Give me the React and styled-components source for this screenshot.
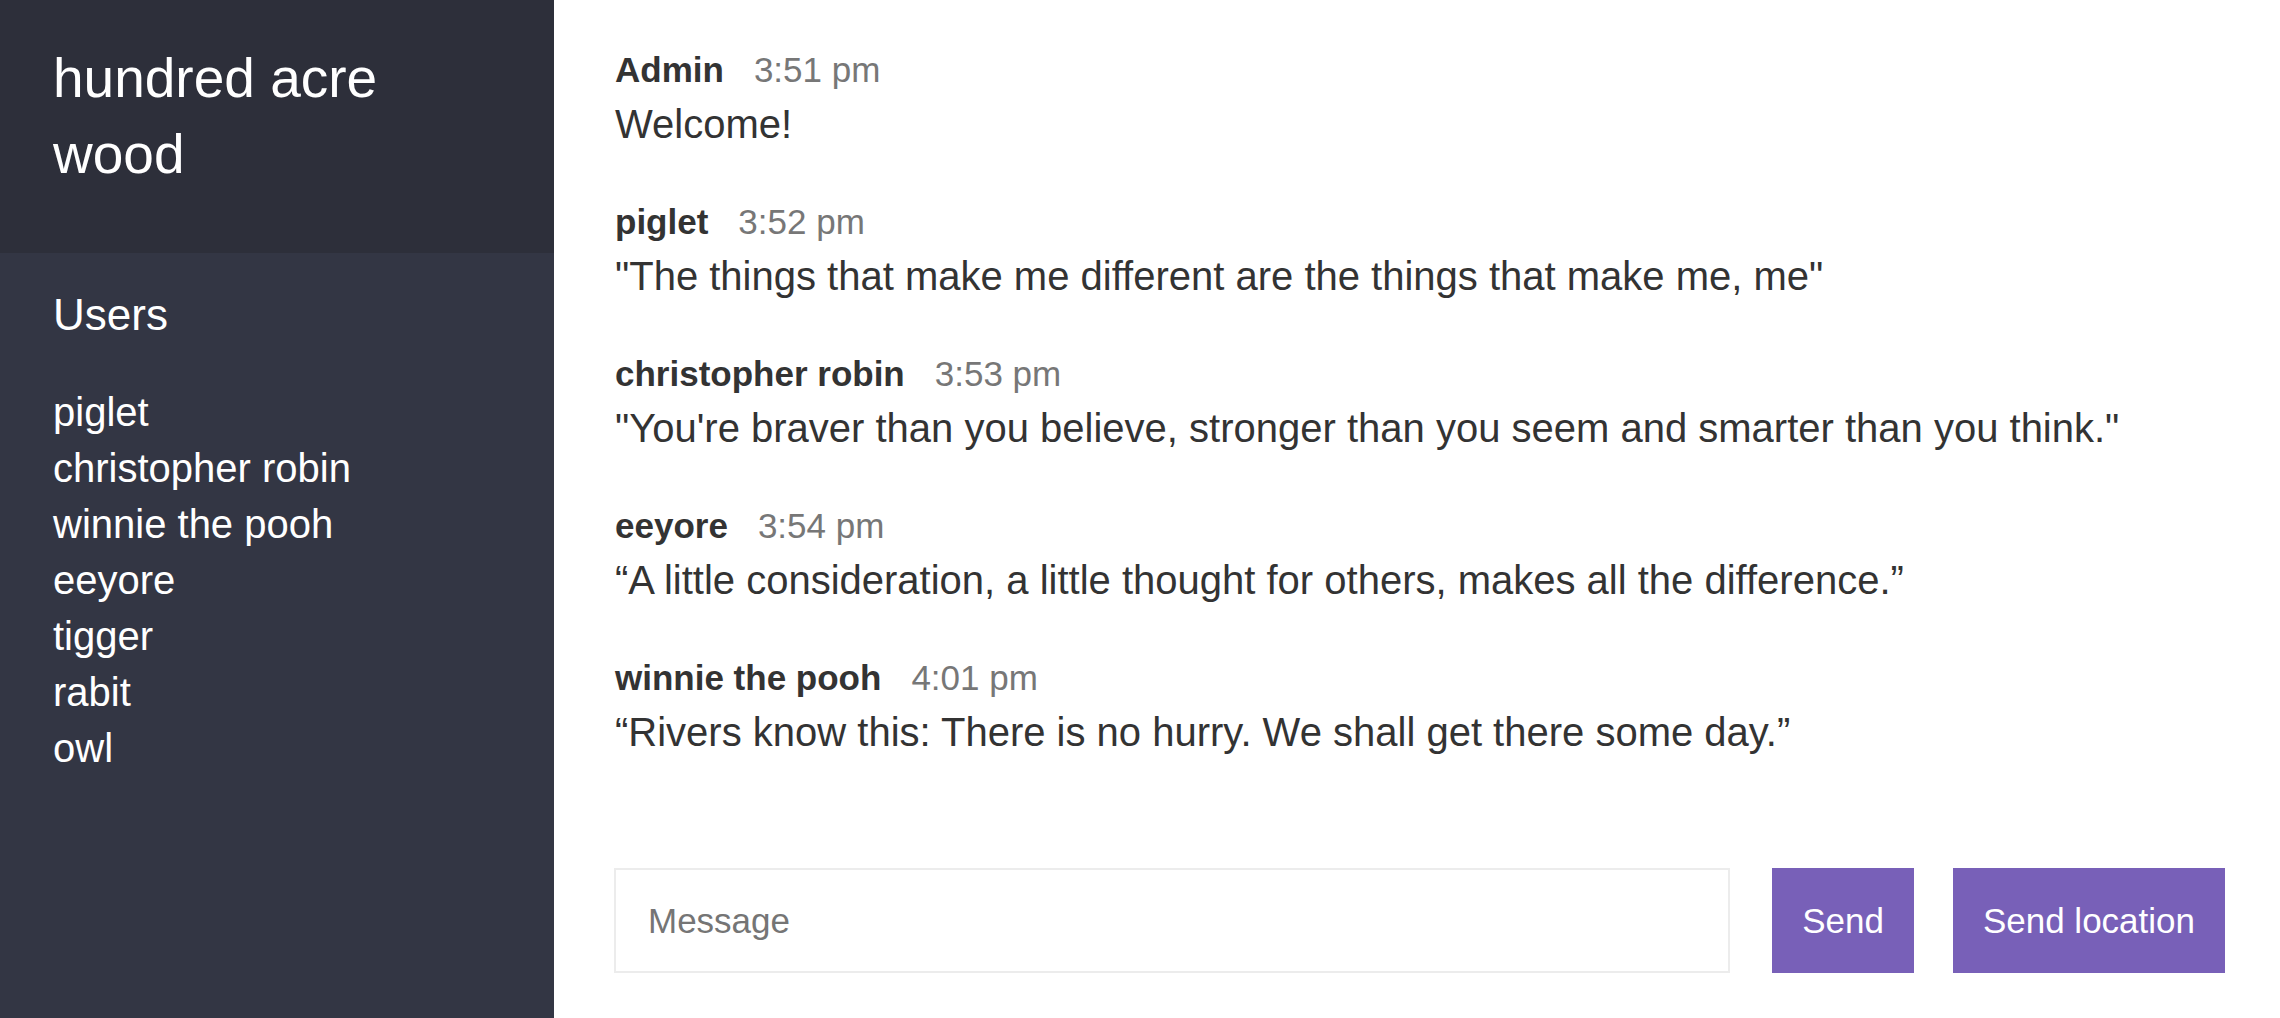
import React from "react";
import styled, { createGlobalStyle } from "styled-components";

const GlobalStyle = createGlobalStyle`
  * {
    margin: 0;
    padding: 0;
    box-sizing: border-box;
  }
  body {
    font-family: "Liberation Sans", Helvetica, Arial, sans-serif;
    font-size: 40px;
    line-height: 1.4;
    color: #333333;
    background: #fff;
  }
`;

const users = [
  "piglet",
  "christopher robin",
  "winnie the pooh",
  "eeyore",
  "tigger",
  "rabit",
  "owl",
];

const messages = [
  { name: "Admin", time: "3:51 pm", text: "Welcome!" },
  {
    name: "piglet",
    time: "3:52 pm",
    text: '"The things that make me different are the things that make me, me"',
  },
  {
    name: "christopher robin",
    time: "3:53 pm",
    text: '"You\'re braver than you believe, stronger than you seem and smarter than you think."',
  },
  {
    name: "eeyore",
    time: "3:54 pm",
    text: "\u201cA little consideration, a little thought for others, makes all the difference.\u201d",
  },
  {
    name: "winnie the pooh",
    time: "4:01 pm",
    text: "\u201cRivers know this: There is no hurry. We shall get there some day.\u201d",
  },
];

export default function App() {
  return (
    <>
      <GlobalStyle />
      <Chat>
        <Sidebar>
          <RoomTitle>hundred acre wood</RoomTitle>
          <ListTitle>Users</ListTitle>
          <UserList>
            {users.map((u) => (
              <li key={u}>{u}</li>
            ))}
          </UserList>
        </Sidebar>
        <Main>
          <Messages>
            {messages.map((m) => (
              <Message key={m.name + m.time}>
                <p>
                  <Name>{m.name}</Name>
                  <Meta>{m.time}</Meta>
                </p>
                <p>{m.text}</p>
              </Message>
            ))}
          </Messages>
          <Compose>
            <Form onSubmit={(e) => e.preventDefault()}>
              <Input placeholder="Message" />
              <Button>Send</Button>
            </Form>
            <Button>Send location</Button>
          </Compose>
        </Main>
      </Chat>
    </>
  );
}

const Chat = styled.div`
  display: flex;
  height: 1018px;
`;

const Sidebar = styled.div`
  width: 554px;
  flex-shrink: 0;
  height: 100%;
  color: #ffffff;
  background: #333644;
`;

const RoomTitle = styled.h2`
  font-weight: 400;
  font-size: 55px;
  line-height: 76px;
  background: #2d2f3a;
  padding: 40px 53px 61px 53px;
`;

const ListTitle = styled.h3`
  font-weight: 500;
  font-size: 44px;
  line-height: 62px;
  padding: 31px 53px 0 53px;
`;

const UserList = styled.ul`
  list-style-type: none;
  font-weight: 300;
  font-size: 40px;
  line-height: 56px;
  padding: 38px 53px 0 53px;
`;

const Main = styled.div`
  flex-grow: 1;
  display: flex;
  flex-direction: column;
  height: 100%;
  min-width: 0;
`;

const Messages = styled.div`
  flex-grow: 1;
  padding: 41px 60px 0 61px;
  overflow: hidden;
`;

const Message = styled.div`
  margin-bottom: 42px;
  font-size: 40px;
  line-height: 54px;
`;

const Name = styled.span`
  font-weight: 700;
  font-size: 35px;
  margin-right: 30px;
`;

const Meta = styled.span`
  color: #777777;
  font-size: 35px;
`;

const Compose = styled.div`
  display: flex;
  flex-shrink: 0;
  padding: 0 55px 45px 60px;
`;

const Form = styled.form`
  display: flex;
  flex-grow: 1;
  margin-right: 39px;
`;

const Input = styled.input`
  flex-grow: 1;
  height: 105px;
  border: 2px solid #ececec;
  padding: 30px 32px;
  margin-right: 42px;
  font-family: inherit;
  font-size: 35px;
  color: #333;
  outline: none;
  &::placeholder {
    color: #757575;
  }
`;

const Button = styled.button`
  cursor: pointer;
  padding: 0 30px;
  height: 105px;
  background: #7860b8;
  border: none;
  color: #ffffff;
  font-family: inherit;
  font-size: 35px;
  white-space: nowrap;
`;
